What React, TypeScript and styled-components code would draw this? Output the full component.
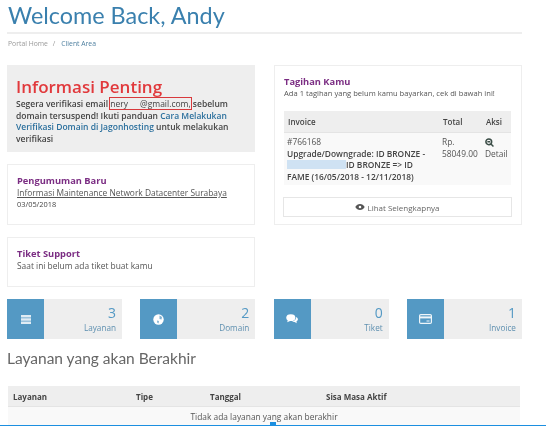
import React from 'react'
import styled, { createGlobalStyle } from 'styled-components'

const Global = createGlobalStyle`
    html, body {
        margin: 0;
        padding: 0;
        background: #fff;
        overflow: hidden;
    }
    body {
        font-family: 'Open Sans', 'Liberation Sans', sans-serif;
        color: #555;
    }
`

const stats = [
    { label: 'Layanan', count: 3, icon: 'server' },
    { label: 'Domain', count: 2, icon: 'globe' },
    { label: 'Tiket', count: 0, icon: 'chat' },
    { label: 'Invoice', count: 1, icon: 'card' },
]

const StatIcon = ({ name }: { name: string }) => {
    if (name === 'server') {
        return (
            <svg width="10" height="9" viewBox="0 0 10 9" fill="#dfecf4">
                <rect x="0" y="0" width="10" height="2.500" />
                <rect x="0" y="3.250" width="10" height="2.500" />
                <rect x="0" y="6.500" width="10" height="2.500" />
            </svg>
        )
    }
    if (name === 'globe') {
        return (
            <svg width="11" height="11" viewBox="0 0 11 11">
                <circle cx="5.500" cy="5.500" r="5.200" fill="#fff" />
                <path d="M6.500 1.500l2.500 1.500-.5 2.500-2-.5zM4 6.500l2 .5-.5 2.500-1.200-.8z" fill="#7fb2d3" />
            </svg>
        )
    }
    if (name === 'chat') {
        return (
            <svg width="12" height="10" viewBox="0 0 13 11" fill="#fff">
                <ellipse cx="5.200" cy="4" rx="5" ry="3.700" />
                <path d="M2 6.500L1.200 9.200 5 7.400z" />
                <path d="M11 3.200c1.300.6 2 1.600 2 2.700 0 1.100-.7 2-1.700 2.500l.6 1.800-2.600-1.400c-1.200 0-2.300-.3-3-.9 2.800-.1 5-1.900 4.700-4.700z" />
            </svg>
        )
    }
    return (
        <svg width="13" height="10" viewBox="0 0 13 10">
            <rect x="0.600" y="0.600" width="11.800" height="8.800" rx="1.200" fill="none" stroke="#eef5f9" strokeWidth="1.200" />
            <rect x="1" y="2.400" width="11" height="2" fill="#eef5f9" />
            <rect x="7.500" y="6.500" width="3" height="1" fill="#eef5f9" />
        </svg>
    )
}

export default function App() {
    return (
        <>
            <Global />
            <Page>
                <Title>Welcome Back, Andy</Title>
                <Breadcrumb>
                    <span>Portal Home</span>
                    <Sep>/</Sep>
                    <Current>Client Area</Current>
                </Breadcrumb>
                <Columns>
                    <Column>
                        <InfoBox>
                            <InfoTitle>Informasi Penting</InfoTitle>
                            <InfoText>
                                Segera verifikasi email <Boxed>nery<Masked />@gmail.com,</Boxed> sebelum domain tersuspend! Ikuti panduan <InfoLink>Cara Melakukan Verifikasi Domain di Jagonhosting</InfoLink> untuk melakukan verifikasi
                            </InfoText>
                        </InfoBox>
                        <Card $height={61}>
                            <CardTitle>Pengumuman Baru</CardTitle>
                            <NewsLink>Informasi Maintenance Network Datacenter Surabaya</NewsLink>
                            <NewsDate>03/05/2018</NewsDate>
                        </Card>
                        <Card $height={50}>
                            <CardTitle>Tiket Support</CardTitle>
                            <CardText>Saat ini belum ada tiket buat kamu</CardText>
                        </Card>
                    </Column>
                    <BillCard>
                        <CardTitle>Tagihan Kamu</CardTitle>
                        <BillIntro>Ada 1 tagihan yang belum kamu bayarkan, cek di bawah ini!</BillIntro>
                        <InvoiceTable>
                            <thead>
                                <tr>
                                    <InvoiceHead>Invoice</InvoiceHead>
                                    <InvoiceHead>Total</InvoiceHead>
                                    <InvoiceHead>Aksi</InvoiceHead>
                                </tr>
                            </thead>
                            <tbody>
                                <tr>
                                    <InvoiceCell>
                                        #766168<br />
                                        <b>Upgrade/Downgrade: ID BRONZE - <Redacted />ID BRONZE =&gt; ID FAME (16/05/2018 - 12/11/2018)</b>
                                    </InvoiceCell>
                                    <InvoiceCell>Rp. 58049.00</InvoiceCell>
                                    <InvoiceCell>
                                        <DetailIcon width="9" height="9" viewBox="0 0 10 10" fill="none" stroke="#3d4f49" strokeWidth="1.700">
                                            <circle cx="4.200" cy="4.200" r="3.200" />
                                            <path d="M6.600 6.600L9.400 9.400M2.600 4.200h3.200" />
                                        </DetailIcon>
                                        Detail
                                    </InvoiceCell>
                                </tr>
                            </tbody>
                        </InvoiceTable>
                        <MoreButton>
                            <svg width="10" height="6" viewBox="0 0 11 7" fill="#555">
                                <path d="M0 3.500C1.300 1.300 3.200 0 5.500 0S9.700 1.300 11 3.500C9.700 5.700 7.800 7 5.500 7S1.300 5.700 0 3.500z" />
                                <circle cx="5.500" cy="3.500" r="1.500" fill="#fff" />
                            </svg>
                            Lihat Selengkapnya
                        </MoreButton>
                    </BillCard>
                </Columns>
                <Stats>
                    {stats.map((s) => (
                        <Stat key={s.label}>
                            <StatBadge><StatIcon name={s.icon} /></StatBadge>
                            <StatBody>
                                <StatCount>{s.count}</StatCount>
                                <StatLabel>{s.label}</StatLabel>
                            </StatBody>
                        </Stat>
                    ))}
                </Stats>
                <SectionTitle>Layanan yang akan Berakhir</SectionTitle>
                <ExpiryTable>
                    <thead>
                        <tr>
                            <ExpiryHead $w={118}>Layanan</ExpiryHead>
                            <ExpiryHead $w={69}>Tipe</ExpiryHead>
                            <ExpiryHead $w={111}>Tanggal</ExpiryHead>
                            <ExpiryHead>Sisa Masa Aktif</ExpiryHead>
                        </tr>
                    </thead>
                    <tbody>
                        <tr>
                            <EmptyCell colSpan={4}>Tidak ada layanan yang akan berakhir</EmptyCell>
                        </tr>
                    </tbody>
                </ExpiryTable>
                <SelectionLine />
                <SelectionHandle />
            </Page>
        </>
    )
}

const Page = styled.div`
    position: relative;
    width: 546px;
    height: 426px;
    padding: 0 24px 0 7px;
    box-sizing: border-box;
    overflow: hidden;
    filter: blur(0.35px);
`

const Title = styled.h1`
    margin: 0;
    padding: 2px 0 3px 1px;
    font-family: 'Lato', 'Liberation Sans', sans-serif;
    font-weight: 400;
    font-size: 23.400px;
    line-height: 27px;
    color: #3a80ae;
    border-bottom: 2px solid #eee;
`

const Breadcrumb = styled.div`
    display: flex;
    align-items: center;
    height: 18px;
    padding-left: 1px;
    font-size: 6.800px;
    color: #999;
`

const Sep = styled.span`
    margin: 0 6px 0 5px;
`

const Current = styled.span`
    color: #4d7f9f;
`

const Columns = styled.div`
    display: grid;
    grid-template-columns: 248px 248px;
    column-gap: 19px;
    margin-top: 13px;
    align-items: start;
`

const Column = styled.div`
    display: flex;
    flex-direction: column;
    gap: 12px;
`

const InfoBox = styled.div`
    box-sizing: border-box;
    height: 87px;
    padding: 10px 10px 0 9px;
    background: #eee;
`

const InfoTitle = styled.div`
    font-size: 17px;
    line-height: 23px;
    font-weight: 600;
    color: #e1393c;
`

const InfoText = styled.div`
    font-size: 8.500px;
    line-height: 11.600px;
    color: #444;
    font-weight: 600;
`

const Boxed = styled.span`
    outline: 1px solid #d8393c;
    font-weight: 400;
`

const Masked = styled.span`
    display: inline-block;
    width: 12px;
`

const InfoLink = styled.span`
    color: #2a6f9d;
`

const Card = styled.div<{ $height: number }>`
    box-sizing: border-box;
    height: ${(p) => p.$height}px;
    padding: 9px 9px 0;
    border: 1px solid #eee;
`

const CardTitle = styled.div`
    font-size: 9.300px;
    line-height: 13px;
    font-weight: 700;
    color: #7b2d83;
`

const CardText = styled.div`
    font-size: 8.400px;
    line-height: 12px;
    color: #555;
`

const NewsLink = styled(CardText)`
    text-decoration: underline;
`

const NewsDate = styled.div`
    font-size: 7.400px;
    line-height: 10px;
    color: #444;
`

const BillCard = styled.div`
    box-sizing: border-box;
    height: 160px;
    padding: 9px 9px 0;
    border: 1px solid #eee;
`

const BillIntro = styled.div`
    font-size: 7.600px;
    line-height: 11px;
    color: #555;
    margin-bottom: 12px;
`

const InvoiceTable = styled.table`
    width: 227px;
    border-collapse: collapse;
    table-layout: fixed;
    & th:nth-child(1) { width: 147px; }
    & th:nth-child(2) { width: 35px; }
`

const InvoiceHead = styled.th`
    height: 21px;
    padding: 0 4px;
    text-align: left;
    font-size: 8px;
    font-weight: 600;
    color: #444;
    background: #eee;
    border-bottom: 1px solid #e4e4e4;
`

const InvoiceCell = styled.td`
    padding: 3px 6px 3px 3px;
    vertical-align: top;
    font-size: 8.400px;
    line-height: 11.500px;
    color: #555;
    background: #f9f9f9;
    &:nth-child(n + 2) {
        padding-right: 0;
    }
    & b {
        font-weight: 600;
        color: #444;
    }
`

const DetailIcon = styled.svg`
    display: block;
    margin: 2px 0 1px;
`

const Redacted = styled.span`
    display: inline-block;
    width: 59px;
    height: 9px;
    vertical-align: -1px;
    background: #cfe2f3;
`

const MoreButton = styled.div`
    display: flex;
    align-items: center;
    justify-content: center;
    gap: 2px;
    box-sizing: border-box;
    width: 229px;
    height: 20px;
    margin: 12px 0 0 -1px;
    border: 1px solid #e6e6e6;
    font-size: 8px;
    color: #666;
`

const Stats = styled.div`
    display: grid;
    grid-template-columns: 115px 115px 115px 115px;
    justify-content: space-between;
    width: 515px;
    margin-top: 12px;
`

const Stat = styled.div`
    display: flex;
    height: 40px;
    background: #eee;
`

const StatBadge = styled.div`
    display: flex;
    align-items: center;
    justify-content: center;
    width: 37px;
    background: #5499c4;
`

const StatBody = styled.div`
    flex: 1;
    padding: 6px 6px 0 0;
    text-align: right;
`

const StatCount = styled.div`
    font-size: 14px;
    line-height: 16px;
    color: #5499c4;
`

const StatLabel = styled.div`
    font-size: 8.200px;
    line-height: 12px;
    margin-top: 1px;
    color: #5f90b0;
`

const SectionTitle = styled.h2`
    margin: 9px 0 0;
    font-family: 'Lato', 'Liberation Sans', sans-serif;
    font-weight: 400;
    font-size: 15.500px;
    line-height: 20px;
    color: #666;
`

const ExpiryTable = styled.table`
    width: 512px;
    margin: 18px 0 0 1px;
    border-collapse: collapse;
    table-layout: fixed;
`

const ExpiryHead = styled.th<{ $w?: number }>`
    width: ${(p) => (p.$w ? `${p.$w}px` : 'auto')};
    height: 20px;
    padding: 0 0 0 5px;
    text-align: left;
    font-size: 8px;
    font-weight: 700;
    color: #444;
    background: #eee;
    border-bottom: 1px solid #e4e4e4;
`

const EmptyCell = styled.td`
    height: 19px;
    padding: 0 0 1px;
    text-align: center;
    font-size: 8.400px;
    color: #555;
    background: #f9f9f9;
`

const SelectionLine = styled.div`
    position: absolute;
    left: 0;
    right: 0;
    bottom: 0;
    height: 1px;
    background: #1c8fe0;
`

const SelectionHandle = styled.div`
    position: absolute;
    left: 270px;
    bottom: 0;
    width: 6px;
    height: 4px;
    background: #1c8fe0;
`
